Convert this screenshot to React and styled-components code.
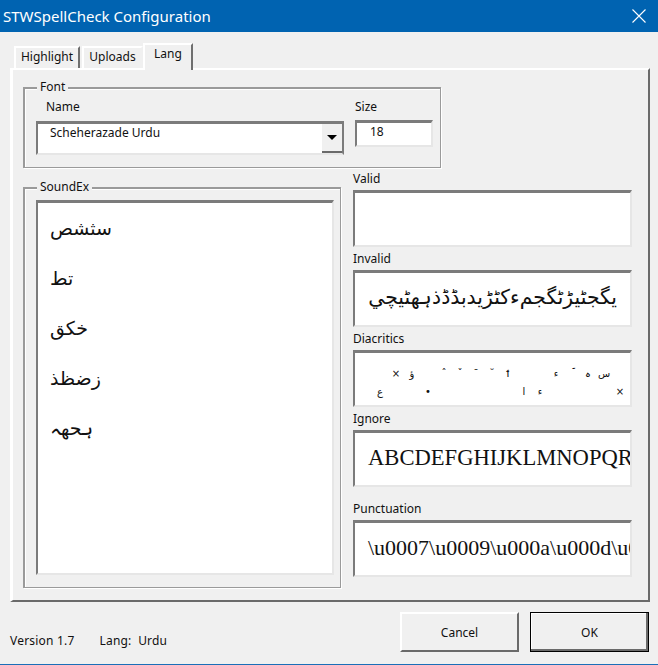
import React from "react";
import styled, { createGlobalStyle, css } from "styled-components";

const GlobalStyle = createGlobalStyle`
  html, body {
    margin: 0;
    padding: 0;
    background: #f0f0f0;
  }
  * {
    box-sizing: border-box;
  }
`;

const uiFont = `"Noto Sans", "DejaVu Sans", sans-serif`;
const arabicFont = `"DejaVu Sans", "Noto Sans", sans-serif`;

const sunken = css`
  background: #fff;
  border-style: solid;
  border-width: 3px 2px 2px 2px;
  border-color: #7b7b7b #e6e6e6 #e6e6e6 #7b7b7b;
  overflow: hidden;
`;

const Window = styled.div`
  width: 658px;
  height: 665px;
  display: flex;
  flex-direction: column;
  background: #f0f0f0;
  border-bottom: 1px solid #1a6fb8;
  font-family: ${uiFont};
  font-size: 12px;
  color: #111;
  overflow: hidden;
`;

const TitleBar = styled.div`
  height: 32px;
  flex: none;
  display: flex;
  align-items: center;
  justify-content: space-between;
  padding: 0 12px 0 3px;
  background: #0063b1;
  color: #fff;
  font-size: 15px;
`;

const CloseIcon = styled.svg`
  width: 14px;
  height: 14px;
  stroke: #fff;
  stroke-width: 1.1;
`;

const Body = styled.div`
  flex: 1;
  display: flex;
  flex-direction: column;
  padding: 11px 8px 0 10px;
`;

const TabStrip = styled.div`
  height: 25px;
  flex: none;
  display: flex;
  align-items: flex-end;
  padding-left: 4px;
`;

const Tab = styled.div`
  display: flex;
  align-items: center;
  justify-content: center;
  width: ${({ $width }) => $width}px;
  height: ${({ $active }) => ($active ? 27 : 22)}px;
  margin-right: ${({ $gap }) => $gap || 0}px;
  margin-bottom: ${({ $active }) => ($active ? -2 : 0)}px;
  padding-bottom: ${({ $active }) => ($active ? 9 : 4)}px;
  border-style: solid;
  border-width: 2px 2px 0 2px;
  border-color: #fff ${({ $hiddenEdge }) => ($hiddenEdge ? "#f0f0f0" : "#6f6f6f")} #f0f0f0 #fff;
  background: #f0f0f0;
  position: relative;
  z-index: 1;
`;

const Panel = styled.div`
  height: 534px;
  flex: none;
  display: flex;
  flex-direction: column;
  padding: 17px 0 0 10px;
  border-style: solid;
  border-width: 2px 2px 2px 3px;
  border-color: #fff #6a6a6a #6a6a6a #fff;
`;

const Group = styled.div`
  position: relative;
  width: ${({ $width }) => $width}px;
  height: ${({ $height }) => $height}px;
  border-style: solid;
  border-width: 2px 1px 1px 2px;
  border-color: #9a9a9a;
  box-shadow: 1px 1px 0 #fff, inset 1px 1px 0 #fff;
  flex: none;
`;

const GroupTitle = styled.span`
  position: absolute;
  top: -10px;
  left: 12px;
  padding: 0 3px;
  line-height: 16px;
  background: #f0f0f0;
`;

const FontRow = styled.div`
  display: flex;
  gap: 11px;
  padding: 11px 0 0 11px;
`;

const Column = styled.div`
  display: flex;
  flex-direction: column;
`;

const Label = styled.label`
  display: block;
  height: ${({ $height }) => $height || 18}px;
  padding-left: ${({ $indent }) => $indent || 0}px;
  line-height: 14px;
`;

const Combo = styled.div`
  ${sunken}
  width: 308px;
  height: 34px;
  display: flex;
  justify-content: space-between;
  padding-left: 12px;
  line-height: 16px;
  border-right-color: #7b7b7b;
`;

const ComboValue = styled.span`
  padding-top: 1px;
`;

const ComboButton = styled.div`
  width: 20px;
  height: 29px;
  display: flex;
  align-items: center;
  justify-content: center;
  background: #f0f0f0;
  border-bottom: 2px solid #6a6a6a;
`;

const ArrowIcon = styled.svg`
  width: 10px;
  height: 5px;
  fill: #000;
`;

const SizeInput = styled.div`
  ${sunken}
  width: 78px;
  height: 27px;
  padding: 1px 0 0 13px;
  line-height: 16px;
`;

const LowerRow = styled.div`
  display: flex;
  gap: 12px;
  padding-top: 4px;
`;

const SoundExGroup = styled.div`
  margin-top: 15px;
`;

const SoundExList = styled.div`
  ${sunken}
  width: 298px;
  height: 375px;
  margin: 11px 0 0 11px;
  padding: 4px 12px;
  display: flex;
  flex-direction: column;
  font-family: ${arabicFont};
  font-size: 19px;
`;

const SoundExLine = styled.div`
  height: 50px;
  line-height: 42px;
  direction: rtl;
  text-align: left;
  unicode-bidi: plaintext;
`;

const Fields = styled.div`
  display: flex;
  flex-direction: column;
`;

const Field = styled.div`
  margin-bottom: ${({ $gap }) => $gap}px;
`;

const FieldBox = styled.div`
  ${sunken}
  width: 279px;
  height: 57px;
  white-space: nowrap;
  line-height: ${({ $lineHeight }) => $lineHeight || 48}px;
`;

const InvalidText = styled.div`
  direction: rtl;
  padding-right: 13px;
  font-family: ${arabicFont};
  font-size: 20.4px;
  letter-spacing: -0.6px;
`;

const SerifText = styled.div`
  padding-left: 13px;
  font-family: "Liberation Serif", serif;
  font-size: ${({ $size }) => $size}px;
`;

const MarkGrid = styled.div`
  display: grid;
  grid-template-columns: repeat(16, 16px);
  grid-auto-rows: 18px;
  padding: 12px 0 0 17px;
  font-family: ${arabicFont};
  font-size: 10px;
  line-height: 18px;
  text-align: center;
`;

const Footer = styled.div`
  flex: 1;
  display: flex;
  align-items: flex-start;
  padding: 10px 1px 0 0;
`;

const Status = styled.div`
  flex: 1;
  display: flex;
  gap: 25px;
  padding-top: 21px;
  line-height: 16px;
  letter-spacing: 0.2px;
`;

const Button = styled.button`
  width: 119px;
  height: 40px;
  margin-left: ${({ $gap }) => $gap || 0}px;
  padding: 0;
  font: inherit;
  color: inherit;
  background: #f0f0f0;
  border-style: solid;
  border-width: 2px;
  border-color: #fff #6a6a6a #6a6a6a #fff;
  ${({ $default }) =>
    $default &&
    css`
      border: 1px solid #000;
      box-shadow: inset -2px -2px 0 #6a6a6a, inset 1px 1px 0 #fff;
    `}
`;

const soundEx = ["سثشص", "تط", "خكق", "زضظذ", "ہحھہ"];

const markRows = [
  ["", "×", "ؤ", "", "ˆ", "ˇ", "ˉ", "˘", "ٲ", "", "", "ء", "ؔ", "ہ", "س", ""],
  ["ع", "", "", "•", "", "", "", "", "", "ا", "ء", "", "", "", "", "×"],
];

const App = () => {
  return (
    <Window>
      <GlobalStyle />
      <TitleBar>
        <span>STWSpellCheck Configuration</span>
        <CloseIcon viewBox="0 0 14 14">
          <path d="M0.5 0.5 L13.5 13.5 M13.5 0.5 L0.5 13.5" />
        </CloseIcon>
      </TitleBar>
      <Body>
        <TabStrip>
          <Tab $width={66} $gap={2}>Highlight</Tab>
          <Tab $width={61} $hiddenEdge>Uploads</Tab>
          <Tab $width={50} $active>Lang</Tab>
        </TabStrip>
        <Panel>
          <Group $width={418} $height={81}>
            <GroupTitle>Font</GroupTitle>
            <FontRow>
              <Column>
                <Label $height={21} $indent={10}>Name</Label>
                <Combo>
                  <ComboValue>Scheherazade Urdu</ComboValue>
                  <ComboButton>
                    <ArrowIcon viewBox="0 0 10 5">
                      <path d="M0 0 H10 L5 5 Z" />
                    </ArrowIcon>
                  </ComboButton>
                </Combo>
              </Column>
              <Column>
                <Label $height={20}>Size</Label>
                <SizeInput>18</SizeInput>
              </Column>
            </FontRow>
          </Group>
          <LowerRow>
            <SoundExGroup>
              <Group $width={318} $height={401}>
                <GroupTitle>SoundEx</GroupTitle>
                <SoundExList>
                  {soundEx.map((line) => (
                    <SoundExLine key={line}>{line}</SoundExLine>
                  ))}
                </SoundExList>
              </Group>
            </SoundExGroup>
            <Fields>
              <Field $gap={5}>
                <Label>Valid</Label>
                <FieldBox />
              </Field>
              <Field $gap={5}>
                <Label>Invalid</Label>
                <FieldBox>
                  <InvalidText>يگجٹيڑٹگجمءکٹڑيدبڈڈذہھٹيچي</InvalidText>
                </FieldBox>
              </Field>
              <Field $gap={5}>
                <Label>Diacritics</Label>
                <FieldBox>
                  <MarkGrid>
                    {markRows.flat().map((mark, i) => (
                      <span key={i}>{mark}</span>
                    ))}
                  </MarkGrid>
                </FieldBox>
              </Field>
              <Field $gap={15}>
                <Label>Ignore</Label>
                <FieldBox $lineHeight={50}>
                  <SerifText $size={22.6}>ABCDEFGHIJKLMNOPQRSTUVWXYZ</SerifText>
                </FieldBox>
              </Field>
              <Field $gap={0}>
                <Label>Punctuation</Label>
                <FieldBox $lineHeight={50}>
                  <SerifText $size={22}>\u0007\u0009\u000a\u000d\u0020\u0021</SerifText>
                </FieldBox>
              </Field>
            </Fields>
          </LowerRow>
        </Panel>
        <Footer>
          <Status>
            <span>Version 1.7</span>
            <span>Lang:&nbsp; Urdu</span>
          </Status>
          <Button>Cancel</Button>
          <Button $gap={11} $default>OK</Button>
        </Footer>
      </Body>
    </Window>
  );
};

export default App;
